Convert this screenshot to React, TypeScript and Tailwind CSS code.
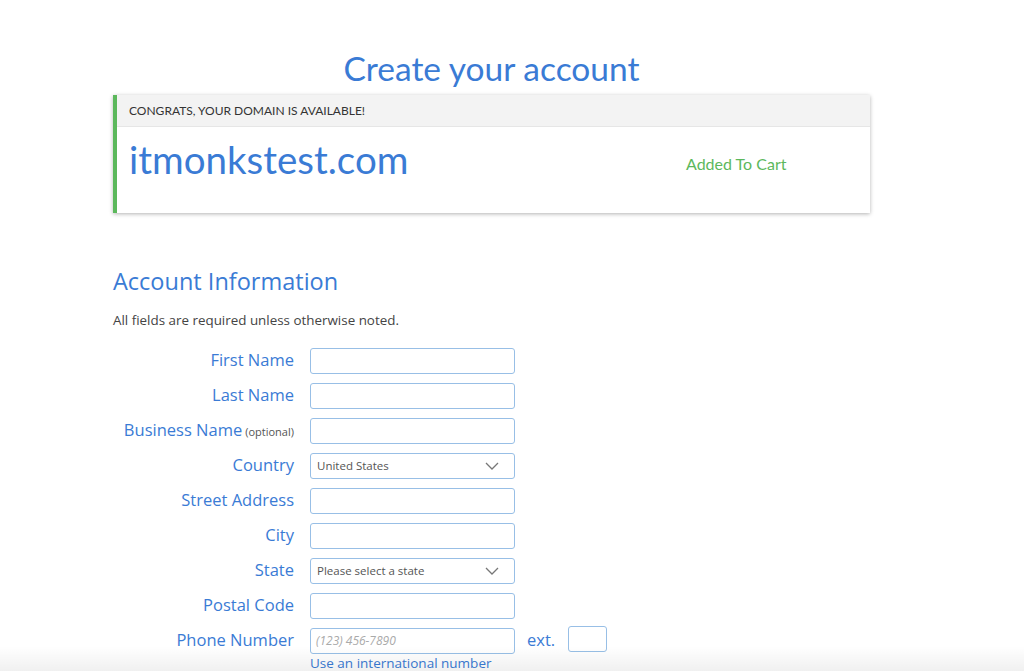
import React from "react";

const blue = "text-[#3a7bd5]";

function Chevron() {
  return (
    <svg width="14" height="8" viewBox="0 0 14 8" className="absolute right-[15px] top-1/2 -translate-y-1/2">
      <path d="M1 1 L7 7 L13 1" fill="none" stroke="#777" strokeWidth="1.3" />
    </svg>
  );
}

function Row({ label, optional, children }: { label: string; optional?: boolean; children: React.ReactNode }) {
  return (
    <div className="flex items-center h-[35px]">
      <div className="w-[197px] text-right pr-[16px] whitespace-nowrap">
        <span className={`${blue} text-[16.5px]`}>{label}</span>
        {optional && <span className="text-[11px] text-[#555] ml-[3px]">(optional)</span>}
      </div>
      {children}
    </div>
  );
}

const inputCls = "w-[205px] h-[26px] border border-[#98bfe6] rounded-[3px] bg-white";

export default function App() {
  return (
    <div className="relative w-[1024px] h-[671px] overflow-hidden bg-white" style={{ fontFamily: "'Open Sans', sans-serif" }}>
      <div className="pl-[113px] pt-[48px]">
        <div className="w-[757px] text-center">
          <h1 className={`${blue} text-[33.5px] leading-[40px]`} style={{ fontFamily: "Lato, sans-serif" }}>Create your account</h1>
        </div>
        <div className="mt-[7px] w-[757px] h-[118px] border-l-[4px] border-[#5cb85c] shadow-[0_1px_4px_rgba(0,0,0,0.3)] bg-white" style={{ fontFamily: "Lato, sans-serif" }}>
          <div className="h-[32px] bg-[#f3f3f3] flex items-center pl-[12px] text-[12px] text-[#333] border-b border-[#e6e6e6]">
            CONGRATS, YOUR DOMAIN IS AVAILABLE!
          </div>
          <div className="flex items-start pl-[12px] pt-[10px]">
            <div className={`${blue} text-[38.5px] leading-[44px] w-[557px]`}>itmonkstest.com</div>
            <div className="text-[16px] text-[#5cb85c] mt-[15px]">Added To Cart</div>
          </div>
        </div>
        <h2 className={`${blue} text-[23.5px] leading-[30px] mt-[53px]`}>Account Information</h2>
        <p className="text-[13.4px] text-[#444] mt-[15px] leading-[18px]">All fields are required unless otherwise noted.</p>
        <div className="mt-[14px]">
          <Row label="First Name"><div className={inputCls} /></Row>
          <Row label="Last Name"><div className={inputCls} /></Row>
          <Row label="Business Name" optional><div className={inputCls} /></Row>
          <Row label="Country">
            <div className={`${inputCls} relative flex items-center pl-[6px] text-[11.5px] text-[#555]`}>United States<Chevron /></div>
          </Row>
          <Row label="Street Address"><div className={inputCls} /></Row>
          <Row label="City"><div className={inputCls} /></Row>
          <Row label="State">
            <div className={`${inputCls} relative flex items-center pl-[6px] text-[11.5px] text-[#555]`}>Please select a state<Chevron /></div>
          </Row>
          <Row label="Postal Code"><div className={inputCls} /></Row>
          <Row label="Phone Number">
            <div className={`${inputCls} flex items-center pl-[5px] text-[12px] italic text-[#aaa]`}>(123) 456-7890</div>
            <span className={`${blue} text-[16.5px] ml-[12px]`}>ext.</span>
            <div className="ml-[13px] w-[39px] h-[26px] border border-[#98bfe6] rounded-[3px] -mt-[3px]" />
          </Row>
          <div className={`${blue} text-[13.5px] leading-[18px] ml-[197px] -mt-[4px]`}>Use an international number</div>
        </div>
      </div>
      <div className="absolute left-0 right-0 bottom-0 h-[25px] bg-gradient-to-b from-[rgba(0,0,0,0)] to-[rgba(0,0,0,0.06)] pointer-events-none" />
    </div>
  );
}
